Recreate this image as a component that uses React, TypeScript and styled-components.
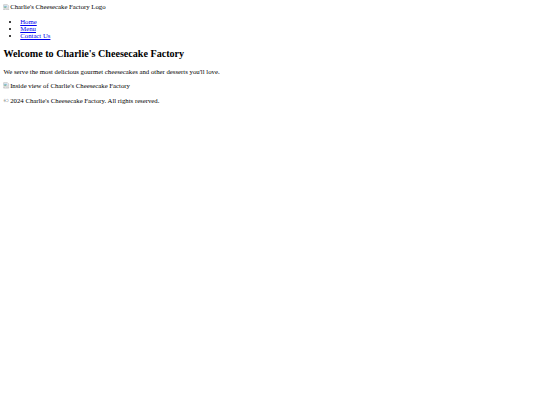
import React from "react";
import styled, { createGlobalStyle } from "styled-components";

const Global = createGlobalStyle`
  html, body { margin: 0; padding: 0; background: #fff; }
  body { font-family: "Liberation Serif", "Times New Roman", serif; color: #000; }
`;

const Page = styled.div`
  zoom: 0.421875;
  padding: 8px;
  font-size: 16px;
  font-family: "Liberation Serif", "Times New Roman", serif;
`;

const Header = styled.header``;

const Nav = styled.nav``;

const NavList = styled.ul`
  margin: 16px 0;
  padding-left: 40px;
  list-style: disc;
`;

const NavLink = styled.a`
  color: #0000ee;
  text-decoration: underline;
`;

const Title = styled.h2`
  font-size: 24px;
  font-weight: bold;
  margin: 21px 0 22px;
`;

const Para = styled.p`
  margin: 16px 0;
`;

const Broken = styled.span<{ $pad: number }>`
  display: inline-flex;
  align-items: flex-end;
  padding-bottom: ${(p) => p.$pad}px;
`;

const Footer = styled.footer`
  p { margin: 16px 0; }
`;

function BrokenIcon() {
  return (
    <svg width="16" height="16" viewBox="0 0 16 16" style={{ verticalAlign: "-3px" }}>
      <path d="M1.5 1.5h9l3 3v4l-2 1.5-2-1.5-2 1.5-2-1.5-2 1.5-2-1.5z" fill="#f1f1f1" stroke="#9a9a9a" />
      <path d="M2 4h8v4H2z" fill="#9fc7e6" />
      <path d="M2 8l3-2 3 2z" fill="#5aa55a" />
      <path d="M1.5 11l2 1.5 2-1.5 2 1.5 2-1.5 2 1.5 2-1.5v3.5h-12z" fill="#f1f1f1" stroke="#9a9a9a" />
    </svg>
  );
}

function AltImage({ alt, pad = 0 }: { alt: string; pad?: number }) {
  return (
    <Broken $pad={pad}>
      <BrokenIcon />
      <span>{alt}</span>
    </Broken>
  );
}

export default function App() {
  return (
    <>
      <Global />
      <Page>
        <Header>
          <AltImage alt="Charlie's Cheesecake Factory Logo" />
          <Nav>
            <NavList>
              <li><NavLink href="#">Home</NavLink></li>
              <li><NavLink href="#">Menu</NavLink></li>
              <li><NavLink href="#">Contact Us</NavLink></li>
            </NavList>
          </Nav>
        </Header>
        <main>
          <Title>Welcome to Charlie's Cheesecake Factory</Title>
          <Para>We serve the most delicious gourmet cheesecakes and other desserts you'll love.</Para>
          <AltImage alt="Inside view of Charlie's Cheesecake Factory" pad={3} />
        </main>
        <Footer>
          <p>© 2024 Charlie's Cheesecake Factory. All rights reserved.</p>
        </Footer>
      </Page>
    </>
  );
}
